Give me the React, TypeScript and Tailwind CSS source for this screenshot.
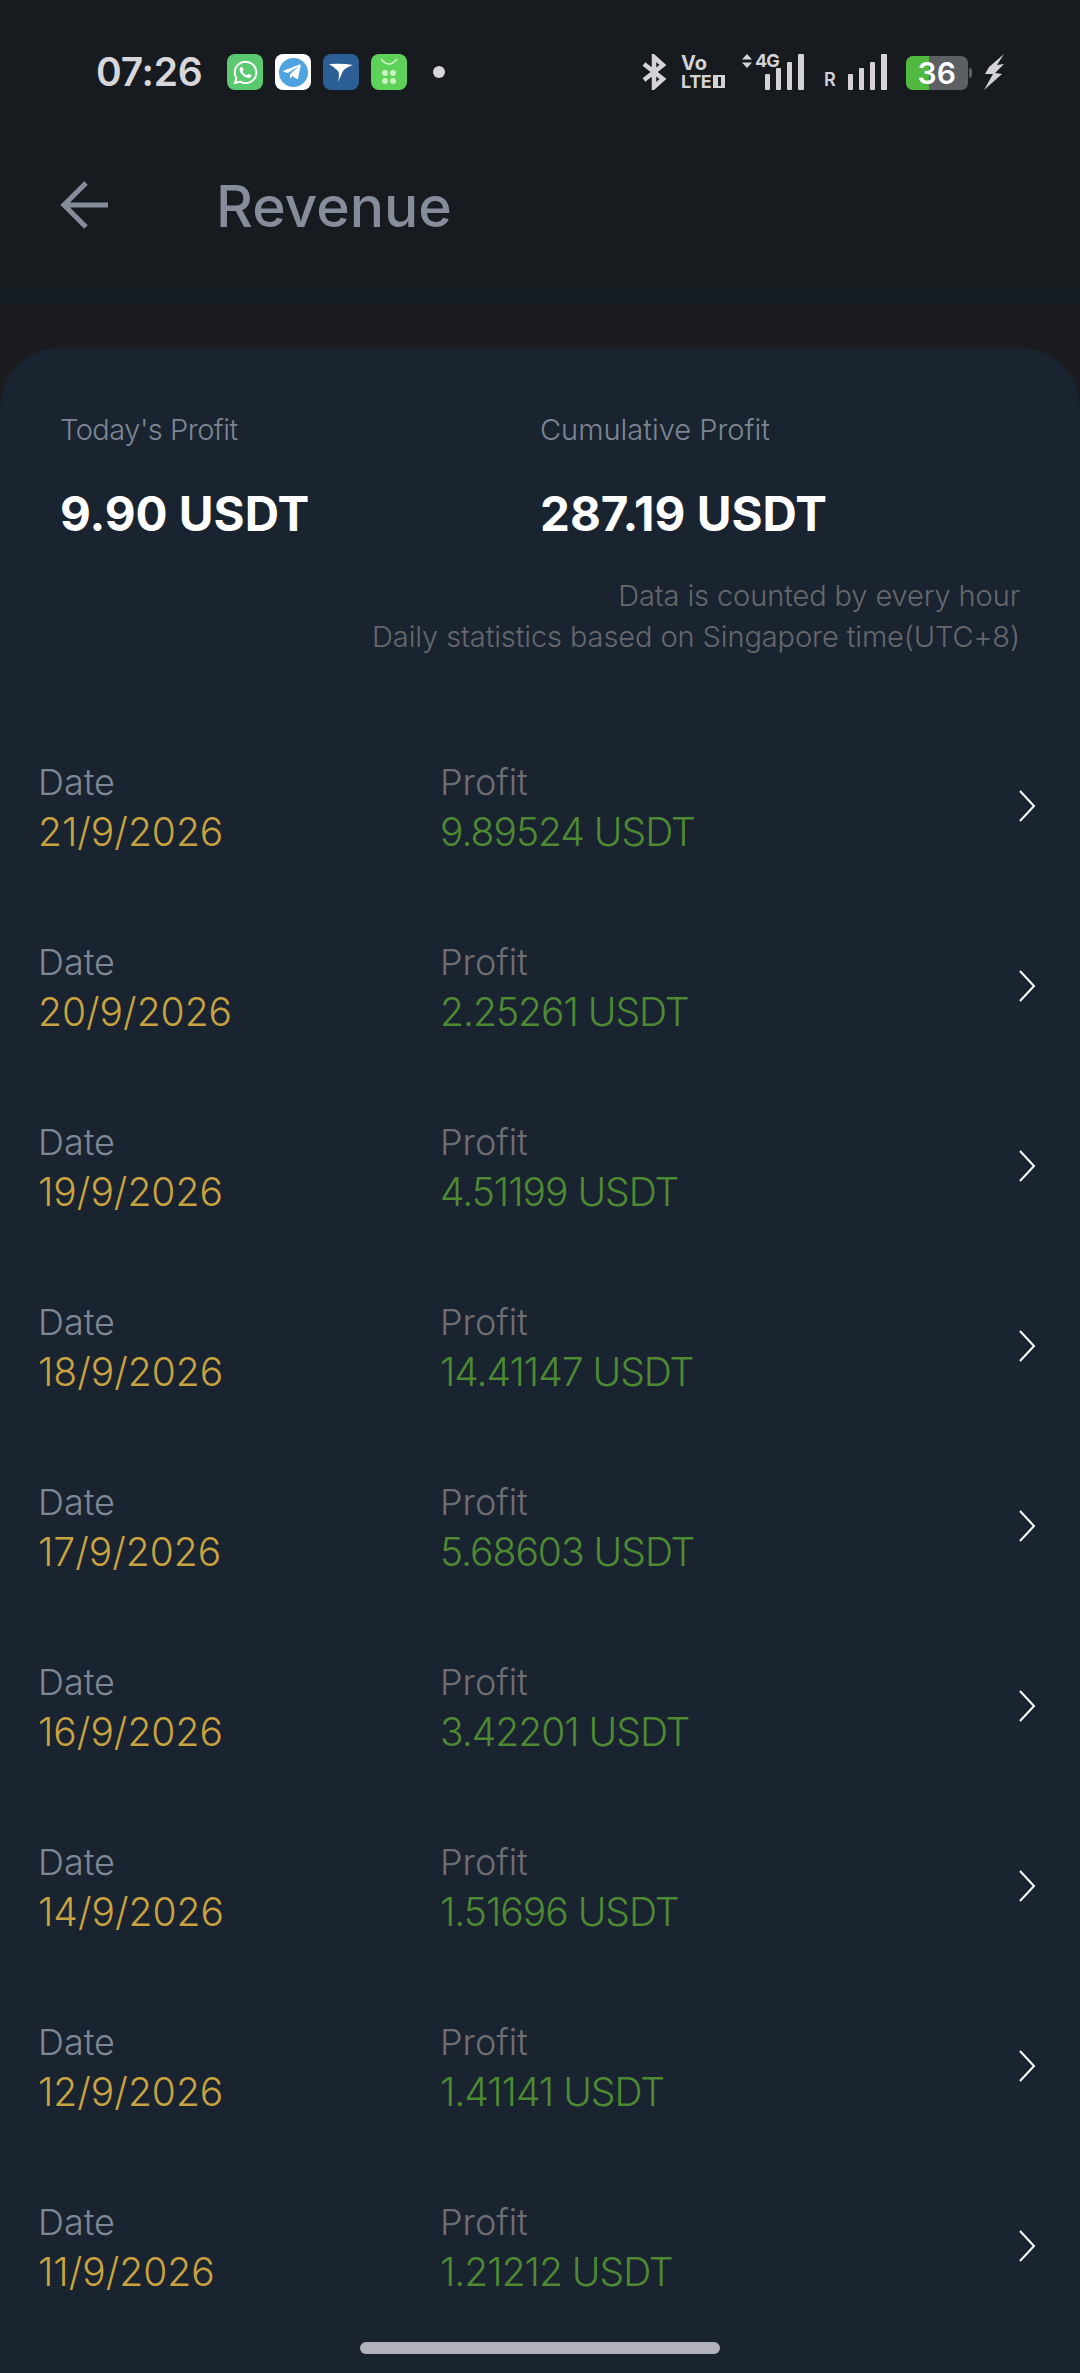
import React from 'react'
import { FaWhatsapp, FaTelegramPlane } from 'react-icons/fa'

const rows = [
  { date: '21/9/2026', profit: '9.89524 USDT' },
  { date: '20/9/2026', profit: '2.25261 USDT' },
  { date: '19/9/2026', profit: '4.51199 USDT' },
  { date: '18/9/2026', profit: '14.41147 USDT' },
  { date: '17/9/2026', profit: '5.68603 USDT' },
  { date: '16/9/2026', profit: '3.42201 USDT' },
  { date: '14/9/2026', profit: '1.51696 USDT' },
  { date: '12/9/2026', profit: '1.41141 USDT' },
  { date: '11/9/2026', profit: '1.21212 USDT' },
]

const Bars = ({ className }: { className?: string }) => (
  <svg viewBox="0 0 39 36" className={className} fill="#d3d3d8">
    <rect x="0" y="20" width="5" height="16" rx="1" />
    <rect x="11" y="14" width="5" height="22" rx="1" />
    <rect x="22" y="8" width="5" height="28" rx="1" />
    <rect x="33" y="0" width="6" height="36" rx="1" />
  </svg>
)

const StatusBar = () => (
  <div className="flex h-[100px] items-start bg-[#171a1f] pl-[96px] pt-[54px]">
    <span className="mr-[27px] w-[104px] text-[39px] leading-[36px] font-semibold tracking-[-0.3px] text-[#d6d6db]">07:26</span>
    <div className="flex h-9 items-center gap-3">
      <div className="flex size-9 items-center justify-center rounded-[8px] bg-[#5bc96f]">
        <FaWhatsapp className="size-[27px] text-white" />
      </div>
      <div className="flex size-9 items-center justify-center rounded-[8px] bg-white">
        <div className="flex size-[29px] items-center justify-center rounded-full bg-[#4fa3e0]">
          <FaTelegramPlane className="mr-[2px] size-[20px] text-white" />
        </div>
      </div>
      <div className="flex size-9 items-center justify-center rounded-[8px] bg-[#2b5f96]">
        <svg viewBox="0 0 36 36" className="size-9">
          <path d="M6 10 Q20 9 30 11 Q22 14 20 17 L15 28 Q17 20 15 17 Q11 13 6 10 Z" fill="#fff" />
        </svg>
      </div>
      <div className="flex size-9 items-center justify-center rounded-[8px] bg-[#5ed158]">
        <svg viewBox="0 0 36 36" className="size-9">
          <path d="M10 5 Q18 15 26 5" fill="none" stroke="#cdf5c8" strokeWidth="1.5" />
          <circle cx="14" cy="19" r="3" fill="#c8f4c2" />
          <circle cx="22" cy="19" r="3" fill="#c8f4c2" />
          <circle cx="14" cy="27" r="3" fill="#c8f4c2" />
          <circle cx="22" cy="27" r="3" fill="#c8f4c2" />
        </svg>
      </div>
      <div className="ml-[14px] size-3 rounded-full bg-[#d6d6db]" />
    </div>
    <div className="ml-[197px] flex h-9 items-end">
      <svg viewBox="0 0 24 36" className="h-9 w-[24px]" fill="none" stroke="#d3d3d8" strokeWidth="4.5">
        <path d="M2 10 L21 25 L12 33 L12 3 L21 11 L2 26" />
      </svg>
      <div className="ml-[15px] flex w-[47px] flex-col font-bold text-[#d3d3d8]">
        <span className="text-[20px] leading-[19px]">Vo</span>
        <div className="flex items-center">
          <span className="text-[18px] leading-[17px] tracking-[-0.4px]">LTE</span>
          <div className="ml-[2px] flex h-[13px] w-[12px] items-center justify-center bg-[#d3d3d8]">
            <div className="h-[9px] w-[3px] bg-[#171a1f]" />
          </div>
        </div>
      </div>
      <div className="relative ml-[14px] h-9 w-[62px]">
        <svg viewBox="0 0 10 14" className="absolute top-0 left-0 h-[14px] w-[10px]" fill="#d3d3d8">
          <path d="M5 0 L10 5.5 L0 5.5 Z M0 8.5 L10 8.5 L5 14 Z" />
        </svg>
        <span className="absolute top-[-2px] left-[13px] text-[18px] leading-[18px] font-bold tracking-[-1px] text-[#d3d3d8]">4G</span>
        <Bars className="absolute right-0 bottom-0 h-9 w-[39px]" />
      </div>
      <span className="ml-[20px] text-[18px] leading-[20px] font-semibold text-[#d3d3d8]">R</span>
      <Bars className="ml-[12px] h-9 w-[39px]" />
      <div className="relative ml-[19px] flex h-[34px] w-[62px] items-center justify-center overflow-hidden rounded-[7px] bg-[#5c6064]">
        <div className="absolute top-0 bottom-0 left-0 w-[23px] bg-[#52b940]" />
        <span className="relative text-[30px] leading-none font-semibold text-white">36</span>
      </div>
      <div className="mb-[12px] ml-[1px] h-[10px] w-[3px] rounded-r-sm bg-[#5c6064]" />
      <svg viewBox="0 0 21 36" className="ml-[12px] h-9 w-[21px]" fill="#d3d3d8">
        <path d="M20 0 L5 13 L1 20 L9 20 L0 36 L18 20 L11 19 L20 10 L13 11 Z" />
      </svg>
    </div>
  </div>
)

const Header = () => (
  <div className="flex h-[188px] items-start bg-[#171a1f] pt-[71px] pl-[60px]">
    <svg viewBox="0 0 48 48" className="mt-[10px] size-[48px]" fill="none" stroke="#868d9a" strokeWidth="5">
      <path d="M48 24 L4 24 M26 2 L4 24 L26 46" />
    </svg>
    <h1 className="ml-[108px] text-[57px] leading-[72px] font-medium text-[#868d9a]">Revenue</h1>
  </div>
)

const Summary = () => (
  <div className="px-[60px] pt-[62px]">
    <div className="flex">
      <div className="w-[480px]">
        <p className="text-[29px] leading-[40px] font-light tracking-[-0.5px] text-[#7d8692]">Today's Profit</p>
        <p className="mt-[32px] text-[47.5px] leading-[64px] font-bold text-white">9.90 USDT</p>
      </div>
      <div>
        <p className="text-[29px] leading-[40px] font-light text-[#7d8692]">Cumulative Profit</p>
        <p className="mt-[32px] text-[47.5px] leading-[64px] font-bold text-white">287.19 USDT</p>
      </div>
    </div>
    <div className="mt-[29px] text-right text-[29px] leading-[41px] font-light tracking-[-0.1px] text-[#66686c]">
      <p>Data is counted by every hour</p>
      <p>Daily statistics based on Singapore time(UTC+8)</p>
    </div>
  </div>
)

const Row = ({ date, profit }: { date: string; profit: string }) => (
  <div className="flex h-[180px] items-start pl-[38px]">
    <div className="w-[402px] font-[350]">
      <p className="text-[36px] leading-[50px] text-[#7f8894]">Date</p>
      <p className="text-[39px] leading-[50px] text-[#c9a33f]">{date}</p>
    </div>
    <div className="flex-1 font-[350]">
      <p className="text-[36px] leading-[50px] text-[#6f6f73]">Profit</p>
      <p className="text-[39px] leading-[50px] tracking-[-1px] text-[#4d8a32]">{profit}</p>
    </div>
    <svg viewBox="0 0 18 32" className="mt-[33px] mr-[44px] h-[32px] w-[18px]" fill="none" stroke="#ffffff" strokeWidth="2">
      <path d="M2 1 L16 16 L2 31" />
    </svg>
  </div>
)

export default function App() {
  return (
    <div
      className="relative h-[2373px] w-[1080px] overflow-hidden bg-[#1a1c1f]"
      style={{ fontFamily: 'Inter, sans-serif' }}
    >
      <StatusBar />
      <Header />
      <div className="h-[15px] bg-[#141c23]" />
      <div className="mt-[45px] h-[2025px] rounded-t-[60px] bg-[#1a2431]">
        <Summary />
        <div className="mt-[100px]">
          {rows.map((row) => (
            <Row key={row.date} date={row.date} profit={row.profit} />
          ))}
        </div>
      </div>
      <div className="absolute bottom-[19px] left-[360px] h-3 w-[360px] rounded-full bg-[#b2b3ba]" />
    </div>
  )
}
